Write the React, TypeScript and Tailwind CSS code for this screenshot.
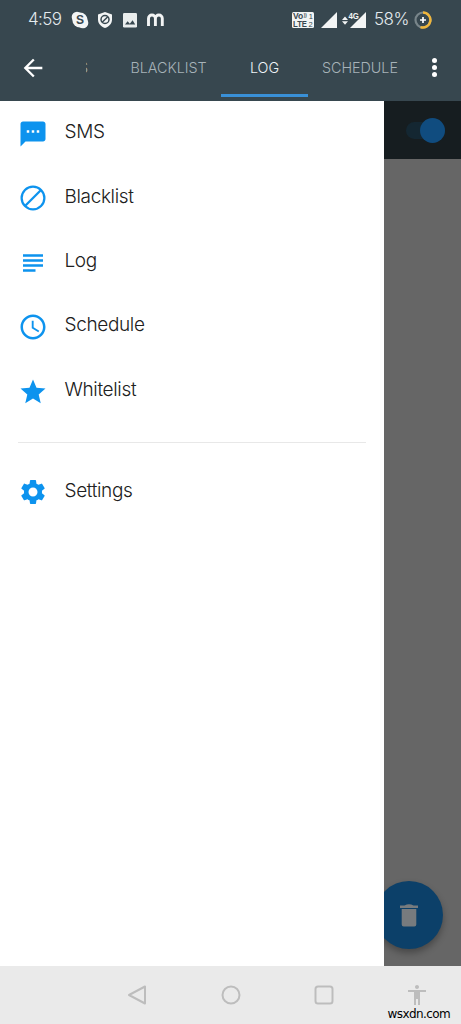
import React from 'react';
import {
  MdAccessibility,
  MdArrowBack,
  MdSchedule,
  MdSettings,
  MdStar,
  MdSubject,
  MdTextsms,
} from 'react-icons/md';

const BlockIcon = ({ className }: { className?: string }) => (
  <svg viewBox="0 0 24 24" className={className} fill="none" stroke="currentColor" strokeWidth="1.8">
    <circle cx="12" cy="12" r="9.1" />
    <path d="M5.6 18.4 18.4 5.6" />
  </svg>
);

const menuItems = [
  { icon: MdTextsms, label: 'SMS' },
  { icon: BlockIcon, label: 'Blacklist' },
  { icon: MdSubject, label: 'Log' },
  { icon: MdSchedule, label: 'Schedule' },
  { icon: MdStar, label: 'Whitelist' },
];

const settingsItem = { icon: MdSettings, label: 'Settings' };

const MenuItem = ({ item }: { item: (typeof menuItems)[number] }) => (
  <li className="flex h-[64.4px] items-center pl-[17.5px]">
    <item.icon className="mt-[1.5px] size-[30px] shrink-0 text-[#0d93ee]" />
    <span className="-mt-[2px] ml-[17px] text-[19px] leading-6 font-light tracking-[-0.35px] text-[#202020]">
      {item.label}
    </span>
  </li>
);

const StatusBar = () => (
  <div className="flex h-[40px] items-center pl-[28px] text-[#e4ebee]">
    <span className="w-[34px] text-[17px] font-light tracking-[-0.6px] whitespace-nowrap">4:59</span>

    <svg viewBox="0 0 18 18" className="ml-[9px] size-[18px]">
      <g fill="#f3f5f5">
        <circle cx="6" cy="6" r="5.3" />
        <circle cx="12" cy="12" r="5.3" />
        <circle cx="9" cy="9" r="7.6" />
      </g>
      <text
        x="9"
        y="13.2"
        textAnchor="middle"
        fontSize="12"
        fontWeight="700"
        fontFamily="Liberation Sans, sans-serif"
        fill="#37474f"
      >
        S
      </text>
    </svg>

    <svg viewBox="0 0 16 18" className="ml-[8px] h-[18px] w-[16px]">
      <path d="M8 1 15 3.5V8.500c0 4.200-3 7.200-7 8.500-4-1.300-7-4.300-7-8.500V3.500Z" fill="#f3f5f5" />
      <g fill="none" stroke="#37474f" strokeWidth="1.5">
        <circle cx="8" cy="8.5" r="4" />
        <path d="m5.200 11.300 5.600-5.600" />
      </g>
    </svg>

    <svg viewBox="0 0 14 15" className="ml-[10px] h-[15px] w-[14px]">
      <rect width="14" height="14.5" rx="1.2" fill="#e9eded" />
      <path d="M2 11.600 4.600 8.200l2.200 2.500 2.800-3.500 2.600 4.400Z" fill="#37474f" />
    </svg>

    <svg viewBox="0 0 17 14" className="ml-[10px] h-[14px] w-[17px]" fill="none" stroke="#f3f5f5" strokeWidth="2.9">
      <path d="M1.500 13V5.500a3.400 3.400 0 0 1 6.900 0V13M8.400 5.500a3.400 3.400 0 0 1 6.900 0V13" />
    </svg>

    <svg viewBox="0 0 22 16" className="ml-[128px] h-[16px] w-[22px]">
      <rect width="22" height="16" rx="1.5" fill="#f1f4f4" />
      <g fill="#37474f" fontFamily="Liberation Sans, sans-serif" fontWeight="700">
        <text x="1" y="7.3" fontSize="8.5">Vo</text>
        <text x="11.8" y="4.8" fontSize="4.5">))</text>
        <text x="16.8" y="7.3" fontSize="7.5" fontWeight="400">1</text>
        <text x="1" y="15" fontSize="8.8" textLength="14" lengthAdjust="spacingAndGlyphs">LTE</text>
        <text x="16.6" y="14.8" fontSize="7.5" fontWeight="400">2</text>
      </g>
    </svg>

    <svg viewBox="0 0 16 16" className="ml-[7px] size-[16px]">
      <path d="M16 0V16H0Z" fill="#f3f5f5" />
    </svg>

    <svg viewBox="0 0 24 18" className="ml-[5px] h-[18px] w-[24px]" fill="#f3f5f5">
      <path d="M3 5.500 6 8.900H0ZM3 13.700 0 10.300h6Z" />
      <path d="M24 1V17H8Z" />
      <text
        x="6.5"
        y="8"
        fontSize="9.5"
        fontWeight="700"
        textLength="10.5"
        lengthAdjust="spacingAndGlyphs"
        fontFamily="Liberation Sans, sans-serif"
        stroke="#37474f"
        strokeWidth="2"
        paintOrder="stroke"
      >
        4G
      </text>
    </svg>

    <span className="ml-[8px] w-[36px] text-[17px] font-light tracking-[-0.5px] whitespace-nowrap">58%</span>

    <svg viewBox="0 0 18 18" className="ml-[4px] size-[18px]" fill="none">
      <circle cx="9" cy="9" r="7.5" stroke="#78858a" strokeWidth="2.2" />
      <path d="M9 1.500a7.500 7.500 0 1 1-2.500 14.600" stroke="#f0b63b" strokeWidth="2.5" />
      <path d="M9 6v6M6 9h6" stroke="#fff" strokeWidth="1.7" />
    </svg>
  </div>
);

const TabBar = () => (
  <div className="flex h-[61px] text-[14.3px] font-light text-[#a7b3b9]">
    <button className="flex w-[86px] shrink-0 items-center pb-[6px] pl-[19px] text-white">
      <MdArrowBack size={28} />
    </button>
    <div className="flex flex-1 overflow-hidden">
      <div className="flex w-[30px] shrink-0 items-center overflow-hidden pb-[5px]">
        <span className="-ml-[7px]">S</span>
      </div>
      <div className="flex w-[105px] shrink-0 items-center justify-center pb-[5px] whitespace-nowrap">BLACKLIST</div>
      <div className="mb-[4px] flex w-[87px] shrink-0 flex-col border-b-[3px] border-[#3990d7] text-[#eef4f7]">
        <span className="mt-[17px] text-center leading-[22px]">LOG</span>
      </div>
      <div className="flex w-[104px] shrink-0 items-center justify-center pb-[5px] whitespace-nowrap">SCHEDULE</div>
    </div>
    <button className="flex w-[53px] shrink-0 flex-col items-center gap-[2px] pt-[18px]">
      <span className="size-[5px] rounded-full bg-white" />
      <span className="size-[5px] rounded-full bg-white" />
      <span className="size-[5px] rounded-full bg-white" />
    </button>
  </div>
);

const Drawer = () => (
  <nav className="w-[384px] shrink-0 bg-white">
    <ul>
      {menuItems.map((item) => (
        <MenuItem key={item.label} item={item} />
      ))}
    </ul>
    <hr className="mx-[18px] mt-[19px] mb-[16.5px] border-[#e8e8e8]" />
    <ul>
      <MenuItem item={settingsItem} />
    </ul>
  </nav>
);

const DimmedPage = () => (
  <div className="flex flex-1 flex-col justify-between overflow-hidden bg-[#666]">
    <div className="flex h-[58px] items-center justify-end bg-[#161d20] pr-[16px]">
      <div className="flex h-[17px] w-[39px] items-center justify-end rounded-full bg-[#142732]">
        <span className="size-[25px] shrink-0 rounded-full bg-[#104c7f]" />
      </div>
    </div>
    <button className="mb-[17px] -ml-[9px] flex size-[68px] items-center justify-center rounded-full bg-[#0c4069] shadow-[0_4px_7px_rgba(0,0,0,0.3)]">
      <svg viewBox="0 0 18 23" className="h-[23px] w-[18px]" fill="#777b7e">
        <path d="M0 1.500h4.500Q9-1 13.500 1.500H18V4H0ZM1.700 5h14.600v15.500a2 2 0 0 1-2 2H3.700a2 2 0 0 1-2-2Z" />
      </svg>
    </button>
  </div>
);

const NavigationBar = () => (
  <div className="relative flex h-[58px] bg-[#eaeaea] pt-[19px] pl-[127px] text-[#bdbdbd]">
    <svg viewBox="0 0 20 20" className="size-[20px]" fill="none" stroke="currentColor" strokeWidth="2" strokeLinejoin="round">
      <path d="M18 1.500v17L2 10Z" />
    </svg>
    <svg viewBox="0 0 20 20" className="ml-[73.5px] size-[20px]" fill="none" stroke="currentColor" strokeWidth="2">
      <circle cx="10" cy="10" r="8.5" />
    </svg>
    <svg viewBox="0 0 20 20" className="ml-[73.5px] size-[20px]" fill="none" stroke="currentColor" strokeWidth="2">
      <rect x="1.5" y="1.5" width="17" height="17" rx="2.5" />
    </svg>
    <MdAccessibility className="-mt-[2px] ml-[71px] size-[24px]" />
    <span className="absolute right-[11px] bottom-[2px] font-['DejaVu_Sans'] text-[12px] leading-[15px] tracking-[-0.6px] text-black">
      wsxdn.com
    </span>
  </div>
);

const App = () => {
  return (
    <div className="flex h-[1024px] w-[461px] flex-col overflow-hidden bg-white font-[Inter,'Liberation_Sans',sans-serif]">
      <header className="h-[101px] shrink-0 bg-[#37474f]">
        <StatusBar />
        <TabBar />
      </header>
      <main className="flex h-[865px] shrink-0">
        <Drawer />
        <DimmedPage />
      </main>
      <NavigationBar />
    </div>
  );
};

export default App;
